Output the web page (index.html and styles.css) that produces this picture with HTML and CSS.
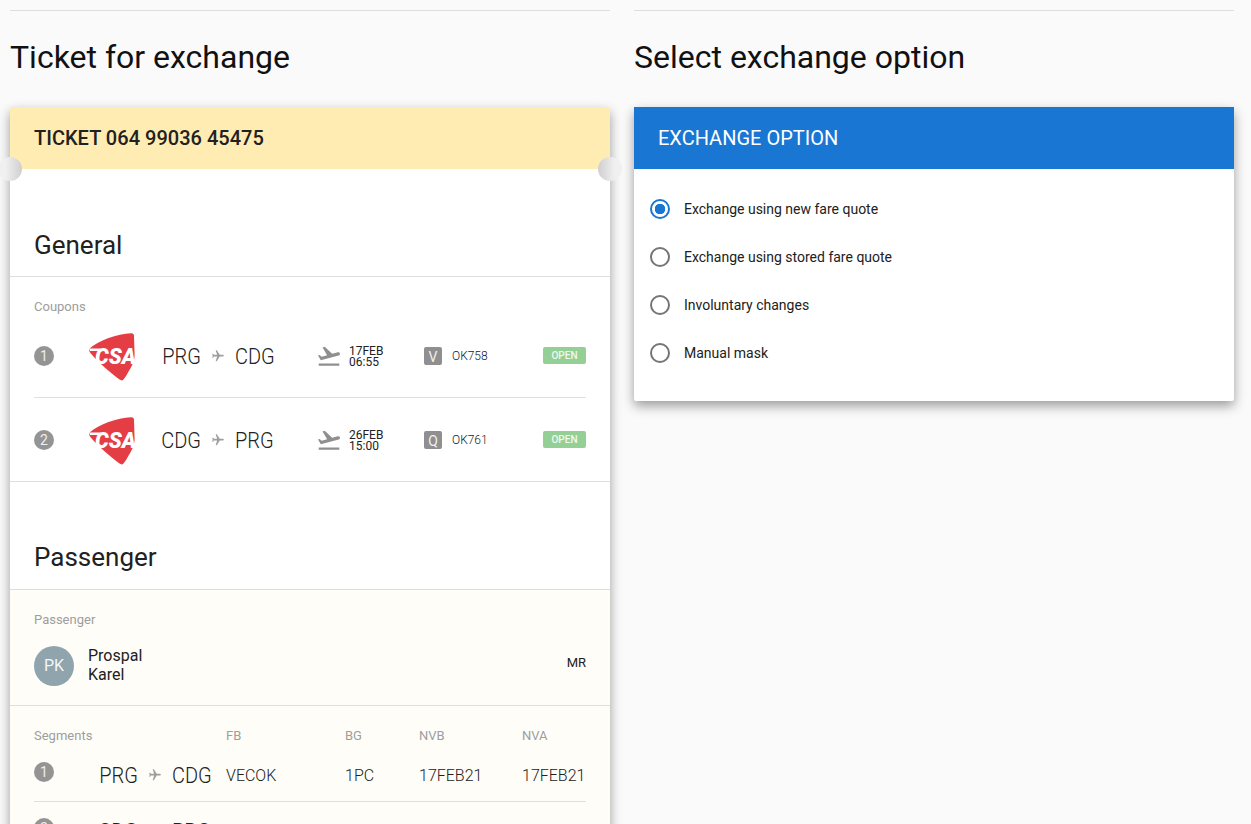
FILE: index.html
```html
<!DOCTYPE html>
<html lang="en">
<head>
<meta charset="utf-8">
<title>Ticket exchange</title>
<link rel="stylesheet" href="styles.css">
</head>
<body>
<svg class="defs" width="0" height="0" aria-hidden="true">
  <symbol id="csa" viewBox="0 0 46 48">
    <path d="M0.6 15.5C10 7 28 1 42 0.2C44 0 45 1 45 3L45.6 22C45.6 28 43 33 40.5 37C38.5 40.5 36.5 44 34.5 46.5C33.5 47.8 32 47.6 30.5 46.6C20 38.5 9 29 1.8 20.5C0.2 18.6 -0.4 17 0.6 15.5Z" fill="#e53d44"/>
    <path d="M0 15.6H12V18H1Z" fill="#fff"/>
    <text x="6" y="30.5" class="csa-text">CSA</text>
  </symbol>
  <symbol id="takeoff" viewBox="0 0 24 24">
    <path d="M2.5 19h19v2h-19zm19.57-9.36c-.21-.8-1.04-1.28-1.84-1.06L14.92 10l-6.9-6.43-1.93.51 4.14 7.17-4.97 1.33-1.97-1.54-1.45.39 1.82 3.16.77 1.33 1.6-.43 5.31-1.42 4.35-1.16L21 11.49c.81-.23 1.28-1.05 1.07-1.85z"/>
  </symbol>
  <symbol id="plane" viewBox="0 0 24 24">
    <path transform="rotate(90 12 12)" d="M21 16v-2l-8-5V3.5c0-.83-.67-1.5-1.5-1.5S10 2.67 10 3.5V9l-8 5v2l8-2.5V19l-2 1.5V22l3.5-1 3.5 1v-1.5L13 19v-5.5l8 2.5z"/>
  </symbol>
</svg>
<main class="page">
  <section class="column">
    <h1 class="page-title">Ticket for exchange</h1>
    <div class="card ticket">
      <header class="card-head ticket-head">TICKET 064 99036 45475</header>
      <span class="notch notch-left"></span>
      <span class="notch notch-right"></span>
      <div class="block-general">
        <h2 class="block-title">General</h2>
        <div class="coupons">
          <div class="label">Coupons</div>
          <div class="coupon">
            <span class="num">1</span>
            <svg class="logo"><use href="#csa"/></svg>
            <div class="route">
              <span class="from">PRG</span>
              <svg class="plane"><use href="#plane"/></svg>
              <span class="to">CDG</span>
            </div>
            <svg class="takeoff"><use href="#takeoff"/></svg>
            <div class="when">17FEB<br>06:55</div>
            <span class="class-box">V</span>
            <span class="flight">OK758</span>
            <span class="status">OPEN</span>
          </div>
          <div class="coupon">
            <span class="num">2</span>
            <svg class="logo"><use href="#csa"/></svg>
            <div class="route">
              <span class="from">CDG</span>
              <svg class="plane"><use href="#plane"/></svg>
              <span class="to">PRG</span>
            </div>
            <svg class="takeoff"><use href="#takeoff"/></svg>
            <div class="when">26FEB<br>15:00</div>
            <span class="class-box">Q</span>
            <span class="flight">OK761</span>
            <span class="status">OPEN</span>
          </div>
        </div>
      </div>
      <div class="block-passenger">
        <h2 class="block-title">Passenger</h2>
        <div class="cream">
          <div class="person-area">
            <div class="label">Passenger</div>
            <div class="person">
              <span class="avatar">PK</span>
              <div class="person-name">Prospal<br>Karel</div>
              <span class="person-title">MR</span>
            </div>
          </div>
          <div class="segments">
            <div class="seg-grid seg-labels label">
              <span>Segments</span><span>FB</span><span>BG</span><span>NVB</span><span>NVA</span>
            </div>
            <div class="seg-grid seg-row">
              <div class="seg-route">
                <span class="num">1</span>
                <div class="route">
                  <span class="from">PRG</span>
                  <svg class="plane"><use href="#plane"/></svg>
                  <span class="to">CDG</span>
                </div>
              </div>
              <span>VECOK</span><span>1PC</span><span>17FEB21</span><span>17FEB21</span>
            </div>
            <div class="seg-grid seg-row">
              <div class="seg-route">
                <span class="num">2</span>
                <div class="route">
                  <span class="from">CDG</span>
                  <svg class="plane"><use href="#plane"/></svg>
                  <span class="to">PRG</span>
                </div>
              </div>
              <span>VECOK</span><span>1PC</span><span>26FEB21</span><span>26FEB21</span>
            </div>
          </div>
        </div>
      </div>
    </div>
  </section>
  <section class="column">
    <h1 class="page-title">Select exchange option</h1>
    <div class="card options">
      <header class="card-head options-head">EXCHANGE OPTION</header>
      <div class="option-list">
        <div class="option"><span class="radio radio-on"></span>Exchange using new fare quote</div>
        <div class="option"><span class="radio"></span>Exchange using stored fare quote</div>
        <div class="option"><span class="radio"></span>Involuntary changes</div>
        <div class="option"><span class="radio"></span>Manual mask</div>
      </div>
    </div>
  </section>
</main>
</body>
</html>
```
FILE: styles.css
```css
* { box-sizing: border-box; }
html, body { margin: 0; height: 100%; overflow: hidden; }
body { background: #fafafa; color: #212121; font-family: Roboto, "Liberation Sans", sans-serif; }
.defs { display: block; height: 0; }
.page { display: grid; grid-template-columns: 600px 600px; column-gap: 24px; padding: 10px 0 0 10px; }
.column { border-top: 1px solid #dedede; min-width: 0; }
.page-title { margin: 0; height: 96px; padding-top: 24px; font-size: 32px; line-height: 44px; font-weight: 400; color: #111; }
.card { position: relative; background: #fff; box-shadow: 0 5px 12px rgba(0,0,0,.38); border-radius: 2px; }
.card-head { height: 62px; padding: 0 24px 0; display: flex; align-items: center; font-size: 20px; }
.ticket-head { background: #ffecb3; font-weight: 500; letter-spacing: .02px; color: #212121; border-radius: 2px 2px 0 0; }
.options-head { background: #1976d2; color: #fff; }
.notch { position: absolute; top: 50px; width: 24px; height: 24px; border-radius: 50%; }
.notch-left { left: -12px; background: linear-gradient(to right, #f0f0f0 30%, #cfcfcf); }
.notch-right { right: -12px; background: linear-gradient(to right, #cfcfcf, #f0f0f0 70%); }
.block-general { padding-top: 56px; border-bottom: 1px solid #dedede; }
.block-title { margin: 0; height: 52px; padding: 0 24px; font-size: 26px; line-height: 40px; font-weight: 400; color: #212121; border-bottom: 1px solid #dedede; }
.block-passenger .block-title { height: 53px; }
.label { font-size: 13px; line-height: 14px; color: #9e9e9e; }
.coupons { padding: 23px 24px 0; }
.coupon { display: flex; align-items: center; height: 84px; border-bottom: 1px solid #e0e0e0; }
.coupon:last-child { border-bottom: 0; height: 83px; }
.num { flex: none; width: 20px; height: 20px; border-radius: 50%; background: #949494; color: #eee; font-size: 14px; line-height: 20px; text-align: center; }
.coupon .num { margin-right: 35px; }
.logo { flex: none; width: 46px; height: 48px; margin-right: 26px; margin-top: 3px; }
.csa-text { font-family: Roboto, sans-serif; font-weight: 900; font-style: italic; font-size: 21.5px; fill: #fff; }
.route { flex: none; display: grid; grid-template-columns: 40px 34px 40px; align-items: center; font-size: 20px; font-weight: 300; line-height: 28px; }
.from, .to { display: inline-block; white-space: nowrap; transform: scaleY(1.1); }
.from { text-align: right; }
.to { text-align: left; }
.plane { width: 14px; height: 14px; fill: #9e9e9e; justify-self: center; }
.coupon .route { margin-right: 41px; }
.takeoff { flex: none; width: 26px; height: 26px; fill: #8f8f8f; margin-right: 7px; }
.when { flex: none; width: 75px; margin-top: 2px; font-size: 12px; line-height: 11px; color: #212121; }
.class-box { flex: none; width: 18px; height: 18px; margin-right: 10px; border-radius: 2px; background: #8f8f8f; color: #f0f0f0; font-size: 14px; line-height: 20px; text-align: center; }
.flight { flex: 1; font-size: 12px; font-weight: 300; }
.status { flex: none; width: 43px; height: 17px; border-radius: 2px; background: #94d095; color: #f1f8f1; font-size: 10px; line-height: 17px; text-align: center; font-weight: 500; }
.block-passenger { padding-top: 55px; }
.cream { background: #fffdf8; }
.person-area { padding: 23px 24px 19px; border-bottom: 1px solid #dedede; }
.person { display: flex; align-items: center; margin-top: 19px; }
.avatar { flex: none; width: 40px; height: 40px; border-radius: 50%; background: #90a4ae; color: #f5f5f5; font-size: 16px; line-height: 40px; text-align: center; margin-right: 14px; }
.person-name { flex: 1; font-size: 16px; line-height: 19px; margin-top: -2px; }
.person-title { font-size: 13px; margin-top: -7px; }
.segments { padding: 23px 24px 0; }
.seg-labels { margin-bottom: 3px; }
.seg-grid { display: grid; grid-template-columns: 192px 119px 74px 103px 64px; }
.seg-row { height: 56px; padding-top: 3px; align-items: center; border-bottom: 1px solid #e0e0e0; font-size: 16px; font-weight: 300; }
.seg-route { display: flex; align-items: center; }
.seg-route .num { margin-right: 44px; margin-top: -6px; font-weight: 400; }
.option-list { padding: 16px 16px 24px; }
.option { display: flex; align-items: center; height: 48px; font-size: 14px; color: #212121; }
.radio { flex: none; width: 20px; height: 20px; margin-right: 14px; border: 2px solid #757575; border-radius: 50%; }
.radio-on { border-color: #1976d2; background: radial-gradient(circle, #1976d2 0 5px, transparent 5.5px); }
```
